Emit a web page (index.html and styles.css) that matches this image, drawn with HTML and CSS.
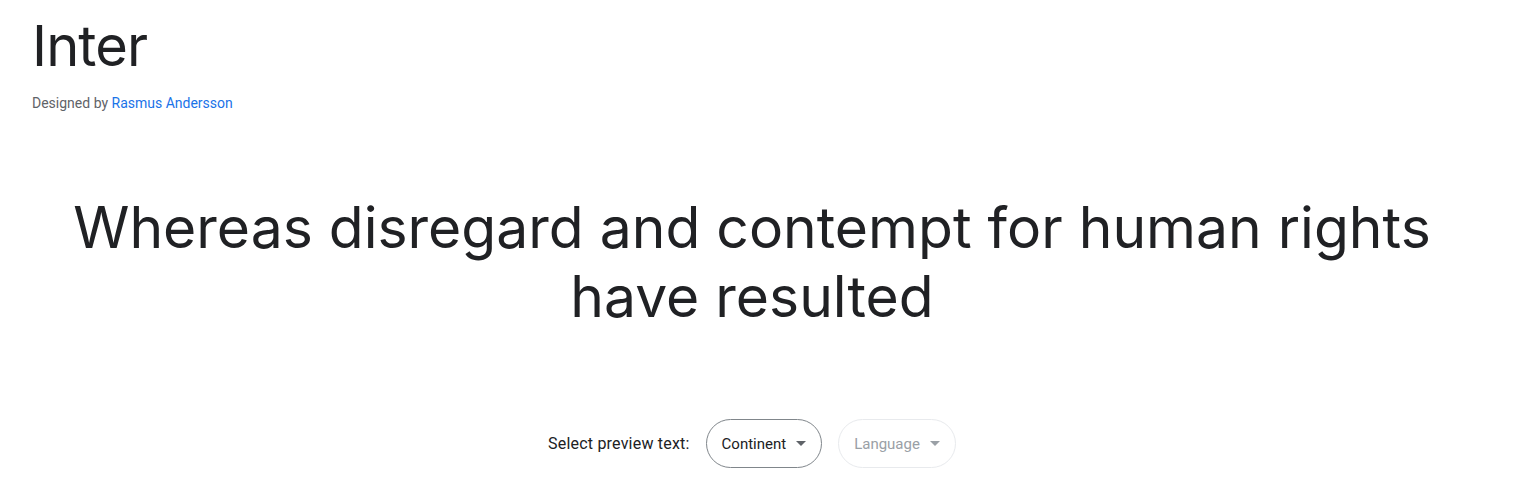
FILE: index.html
```html
<!DOCTYPE html>
<html lang="en">
<head>
<meta charset="utf-8">
<title>Inter</title>
<link rel="stylesheet" href="styles.css">
</head>
<body>
<header class="header">
  <h1 class="title">Inter</h1>
  <p class="byline">Designed by <a class="designer" href="#">Rasmus Andersson</a></p>
</header>
<main class="main">
  <p class="preview">Whereas disregard and contempt for human rights have resulted</p>
  <div class="controls">
    <span class="label">Select preview text:</span>
    <button class="pill">Continent <span class="caret"></span></button>
    <button class="pill pill-disabled" disabled>Language <span class="caret"></span></button>
  </div>
</main>
</body>
</html>
```
FILE: styles.css
```css
* { box-sizing: border-box; }
html, body { margin: 0; padding: 0; background: #fff; }
body { font-family: Roboto, "Noto Sans", sans-serif; color: #202124; }

.header { padding: 14px 32px 0 32px; }
.title {
  margin: 0;
  font-family: Inter, sans-serif;
  font-weight: 400;
  font-size: 56px;
  line-height: 64px;
  color: #202124;
  letter-spacing: -0.9px;
}
.byline {
  margin: 15px 0 0 0;
  font-size: 14px;
  line-height: 20px;
  color: #5f6368;
}
.designer { color: #1a73e8; text-decoration: none; }

.main {
  padding: 0 53px 0 32px;
  display: flex;
  flex-direction: column;
  align-items: center;
}
.preview {
  margin: 80px 0 0 0;
  font-family: Inter, sans-serif;
  font-weight: 400;
  font-size: 57px;
  line-height: 69px;
  text-align: center;
  color: #202124;
  max-width: 1420px;
}
.controls {
  margin-top: 88px;
  display: flex;
  align-items: center;
  gap: 16px;
}
.label { font-size: 16px; letter-spacing: 0.2px; color: #202124; }
.pill {
  height: 49px;
  padding: 0 15px;
  border: 1px solid #80868b;
  border-radius: 25px;
  background: #fff;
  font-family: Roboto, sans-serif;
  font-size: 15px;
  color: #202124;
  display: flex;
  align-items: center;
  gap: 10px;
}
.caret {
  width: 0; height: 0;
  border-left: 5px solid transparent;
  border-right: 5px solid transparent;
  border-top: 5px solid #5f6368;
}
.pill-disabled { border-color: #e8eaed; color: #9aa0a6; }
.pill-disabled .caret { border-top-color: #9aa0a6; }
```
